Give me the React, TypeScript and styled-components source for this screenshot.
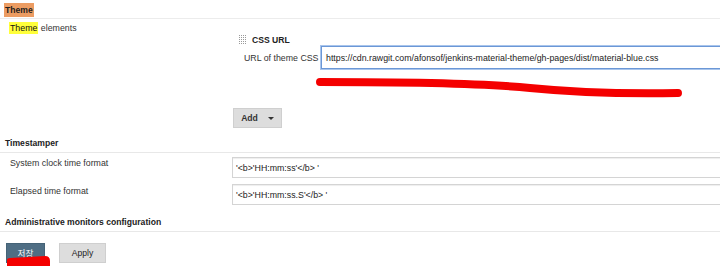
import React from 'react';
import styled, { createGlobalStyle } from 'styled-components';

const GlobalStyle = createGlobalStyle`
	html, body {
		margin: 0;
		padding: 0;
		background: #ffffff;
	}
	body {
		font-family: 'Liberation Sans', Arial, Helvetica, sans-serif;
		font-size: 8.8px;
		color: #333333;
	}
`;

const Page = styled.div`
	position: relative;
	width: 720px;
	height: 266px;
	overflow: hidden;
	display: flex;
	flex-direction: column;
`;

const SectionHeader = styled.div<{ $gap: number }>`
	margin-top: ${(p) => p.$gap}px;
	padding: 0 0 3px 5px;
	line-height: 12px;
	font-weight: bold;
	font-size: 8.6px;
	color: #222222;
	border-bottom: 1px solid #e8e8e8;
`;

const ThemeHeader = styled.div`
	padding: 3px 0 1px 4px;
	line-height: 14px;
	height: 14px;
	border-bottom: 1px solid #ececec;
`;

const OrangeMark = styled.span`
	display: inline-block;
	padding: 0 1px;
	background: #ec9c62;
	font-weight: bold;
	font-size: 8.6px;
	color: #1e1e1e;
`;

const YellowMark = styled.span`
	background: #ffff3a;
	padding: 1px 1px;
	margin-left: -1px;
	color: #111111;
`;

const Row = styled.div<{ $top?: number; $bottom?: number }>`
	display: grid;
	grid-template-columns: 232px 1fr;
	padding: ${(p) => p.$top ?? 0}px 0 ${(p) => p.$bottom ?? 0}px;
`;

const Label = styled.div<{ $top?: number }>`
	padding: ${(p) => p.$top ?? 0}px 0 0 10px;
	line-height: 12px;
	color: #333333;
`;

const Field = styled.div<{ $top?: number }>`
	padding-top: ${(p) => p.$top ?? 0}px;
	display: flex;
	flex-direction: column;
	align-items: flex-start;
	min-width: 0;
`;

const ChunkTitle = styled.div`
	display: flex;
	align-items: center;
	gap: 6px;
	padding-left: 7px;
	line-height: 12px;
	font-weight: bold;
	font-size: 8.6px;
	color: #222222;
`;

const InnerRow = styled.div`
	display: grid;
	grid-template-columns: 89px 1fr;
	align-items: center;
	width: 100%;
`;

const InnerLabel = styled.div`
	padding-left: 12px;
	line-height: 12px;
	white-space: nowrap;
`;

const TextBox = styled.div<{ $focus?: boolean; $h: number }>`
	box-sizing: border-box;
	height: ${(p) => p.$h}px;
	width: 520px;
	display: flex;
	align-items: center;
	padding-left: ${(p) => (p.$focus ? 4 : 3)}px;
	white-space: nowrap;
	color: #222222;
	background: #ffffff;
	border: 1px solid ${(p) => (p.$focus ? '#6b97d6' : '#d4d4d4')};
	box-shadow: ${(p) => (p.$focus ? '0 0 0 1px #a9c5ec' : 'inset 0 1px 1px #eeeeee')};
`;

const Button = styled.button<{ $primary?: boolean; $w: number }>`
	box-sizing: border-box;
	width: ${(p) => p.$w}px;
	height: 20px;
	border: 1px solid ${(p) => (p.$primary ? '#456377' : '#cfcfcf')};
	background: ${(p) => (p.$primary ? '#4f6e84' : '#dddddd')};
	color: ${(p) => (p.$primary ? '#ffffff' : '#222222')};
	font-family: 'Liberation Sans', 'Noto Sans CJK KR', Arial, sans-serif;
	font-size: 8.6px;
	display: flex;
	align-items: center;
	justify-content: center;
	gap: 10px;
	padding: 0;
`;

const AddWrap = styled.div`
	margin-top: 39px;
	padding-left: 1px;
`;

const AddText = styled.span`
	font-weight: bold;
	color: #333333;
`;

const Caret = styled.span`
	width: 0;
	height: 0;
	border-left: 3px solid transparent;
	border-right: 3px solid transparent;
	border-top: 3px solid #333333;
`;

const ButtonBar = styled.div`
	display: flex;
	gap: 14px;
	margin-top: 11px;
	padding-left: 6px;
`;

const Overlay = styled.svg`
	position: absolute;
	left: 0;
	top: 0;
	pointer-events: none;
`;

const Handle = () => (
	<svg width='7' height='10' viewBox='0 0 7 10'>
		{[0, 2, 4, 6, 8].map((y) =>
			[0, 2, 4, 6].map((x) => (
				<rect key={`${x}-${y}`} x={x} y={y} width='1' height='1' fill='#9a9a9a' />
			))
		)}
	</svg>
);

const App = () => {
	return (
		<Page>
			<GlobalStyle />
			<ThemeHeader>
				<OrangeMark>Theme</OrangeMark>
			</ThemeHeader>
			<Row>
				<Label $top={3}>
					<YellowMark>Theme</YellowMark> elements
				</Label>
				<Field $top={15}>
					<ChunkTitle>
						<Handle />
						CSS URL
					</ChunkTitle>
					<InnerRow>
						<InnerLabel>URL of theme CSS</InnerLabel>
						<TextBox $focus $h={23}>
							https://cdn.rawgit.com/afonsof/jenkins-material-theme/gh-pages/dist/material-blue.css
						</TextBox>
					</InnerRow>
					<AddWrap>
						<Button $w={49}>
							<AddText>Add</AddText>
							<Caret />
						</Button>
					</AddWrap>
				</Field>
			</Row>

			<SectionHeader $gap={9}>Timestamper</SectionHeader>
			<Row $top={4} $bottom={2}>
				<Label $top={0}>System clock time format</Label>
				<Field>
					<TextBox $h={21}>'&lt;b&gt;'HH:mm:ss'&lt;/b&gt; '</TextBox>
				</Field>
			</Row>
			<Row $top={4} $bottom={2}>
				<Label $top={1}>Elapsed time format</Label>
				<Field>
					<TextBox $h={21}>'&lt;b&gt;'HH:mm:ss.S'&lt;/b&gt; '</TextBox>
				</Field>
			</Row>

			<SectionHeader $gap={9}>Administrative monitors configuration</SectionHeader>
			<ButtonBar>
				<Button $primary $w={39}>저장</Button>
				<Button $w={47}>Apply</Button>
			</ButtonBar>

			<Overlay width='720' height='266' viewBox='0 0 720 266'>
				<path
					d='M 320 82 C 400 82, 480 83, 530 88 S 620 94, 678 93'
					stroke='#f40000'
					strokeWidth='8'
					strokeLinecap='round'
					fill='none'
				/>
				<path
					d='M 7 260 Q 7 258 10 258 L 45 256 Q 50 256 50 261 L 50 266 L 7 266 Z'
					fill='#f40000'
				/>
			</Overlay>
		</Page>
	);
};

export default App;
